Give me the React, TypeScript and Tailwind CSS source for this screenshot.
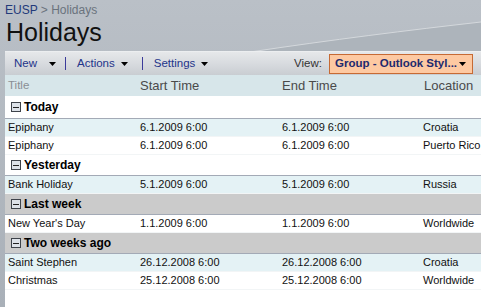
import { Fragment } from 'react'

type Item = { title: string; start: string; end: string; location: string; shade: boolean }
type Group = { name: string; gray: boolean; items: Item[] }

const groups: Group[] = [
  {
    name: 'Today',
    gray: false,
    items: [
      { title: 'Epiphany', start: '6.1.2009 6:00', end: '6.1.2009 6:00', location: 'Croatia', shade: true },
      { title: 'Epiphany', start: '6.1.2009 6:00', end: '6.1.2009 6:00', location: 'Puerto Rico', shade: false },
    ],
  },
  {
    name: 'Yesterday',
    gray: false,
    items: [
      { title: 'Bank Holiday', start: '5.1.2009 6:00', end: '5.1.2009 6:00', location: 'Russia', shade: true },
    ],
  },
  {
    name: 'Last week',
    gray: true,
    items: [
      { title: "New Year's Day", start: '1.1.2009 6:00', end: '1.1.2009 6:00', location: 'Worldwide', shade: false },
    ],
  },
  {
    name: 'Two weeks ago',
    gray: true,
    items: [
      { title: 'Saint Stephen', start: '26.12.2008 6:00', end: '26.12.2008 6:00', location: 'Croatia', shade: true },
      { title: 'Christmas', start: '25.12.2008 6:00', end: '25.12.2008 6:00', location: 'Worldwide', shade: false },
    ],
  },
]

const cols = 'grid grid-cols-[132px_142px_142px_1fr] whitespace-nowrap'

function Caret() {
  return (
    <svg width="7" height="4" viewBox="0 0 7 4" className="block">
      <path d="M0 0h7L3.5 4z" fill="#000" />
    </svg>
  )
}

function Minus() {
  return (
    <span className="inline-flex shrink-0 w-[10px] h-[10px] border border-[#3e434a] bg-[#dde2e8] items-center justify-center mr-[3px]">
      <span className="block w-[6px] h-px bg-[#222]" />
    </span>
  )
}

export default function App() {
  return (
    <div
      className="relative w-[481px] h-[307px] overflow-hidden bg-gradient-to-b from-[#bac0c7] to-[#a9b0b8] text-[11px] text-black"
      style={{ fontFamily: '"Liberation Sans", Arial, sans-serif' }}
    >
      {/* swoosh */}
      <svg className="absolute left-0 top-0" width="481" height="60" viewBox="0 0 481 60">
        <path d="M250 52 C 330 40, 410 30, 481 22 L481 60 L250 60 Z" fill="#adb4bb" />
        <path d="M250 52 C 330 40, 410 30, 481 22" stroke="#d4d8dc" strokeWidth="1" fill="none" />
      </svg>

      <div className="relative pl-[5px]">
        <div className="h-[18px] pt-[4px] leading-[12px] text-[12px] whitespace-nowrap">
          <span className="text-[#223a7a]">EUSP</span>
          <span className="text-[#6a737d]"> &gt; Holidays</span>
        </div>
        <div className="h-[33px] pl-[1px] text-[25px] leading-[28px] text-[#111]">Holidays</div>

        <div className="bg-[#f4f5f6]">
          {/* toolbar */}
          <div className="h-[24px] flex items-center whitespace-nowrap border-t border-[#eceef0] bg-gradient-to-b from-[#e6e8ea] via-[#d8dbdf] to-[#c9cdd2] text-[#23348a] text-[11.5px]">
            <span className="ml-[9px]">New</span>
            <span className="ml-[12px]"><Caret /></span>
            <span className="ml-[9px] w-px h-[13px] bg-[#3b3b9a]" />
            <span className="ml-[11px]">Actions</span>
            <span className="ml-[6px]"><Caret /></span>
            <span className="ml-[14px] w-px h-[13px] bg-[#3b3b9a]" />
            <span className="ml-[11px]">Settings</span>
            <span className="ml-[6px]"><Caret /></span>
            <span className="ml-auto text-[#333] mr-[7px]">View:</span>
            <div className="shrink-0 w-[144px] h-[20px] mr-[8px] flex items-center border border-[#c66a34] bg-[#fdc9a2] pl-[5px] pr-[6px]">
              <span className="font-bold text-[#1d2a6e] text-[11.5px]">Group - Outlook Styl...</span>
              <span className="ml-auto"><Caret /></span>
            </div>
          </div>

          {/* column header */}
          <div className={`${cols} h-[21px] items-center bg-[#d7e6ea] text-[13px] text-[#4a4a4a]`}>
            <div className="pl-[3px] text-[11.5px] text-[#8a8f94]">Title</div>
            <div className="pl-[3px]">Start Time</div>
            <div className="pl-[3px]">End Time</div>
            <div className="pl-[3px]">Location</div>
          </div>

          <div className="bg-white h-[220px]">
            {groups.map((g, i) => (
              <Fragment key={g.name}>
                <div
                  className={`flex items-center pl-[6px] font-bold text-[12px] whitespace-nowrap border-b border-[#a3aab6] ${
                    i === 0 ? 'h-[23px]' : 'h-[21px]'
                  } ${g.gray ? 'bg-[#cbcbcb]' : 'bg-white'}`}
                >
                  <Minus />
                  {g.name}
                </div>
                {g.items.map((it, j) => (
                  <div
                    key={j}
                    className={`${cols} h-[18px] items-center text-[#111] border-b border-[#f2f5f6] ${
                      it.shade ? 'bg-[#e4f2f5]' : 'bg-white'
                    }`}
                  >
                    <div className="pl-[3px]">{it.title}</div>
                    <div className="pl-[3px]">{it.start}</div>
                    <div className="pl-[3px]">{it.end}</div>
                    <div className="pl-[2px]">{it.location}</div>
                  </div>
                ))}
              </Fragment>
            ))}
          </div>
        </div>
      </div>
    </div>
  )
}
